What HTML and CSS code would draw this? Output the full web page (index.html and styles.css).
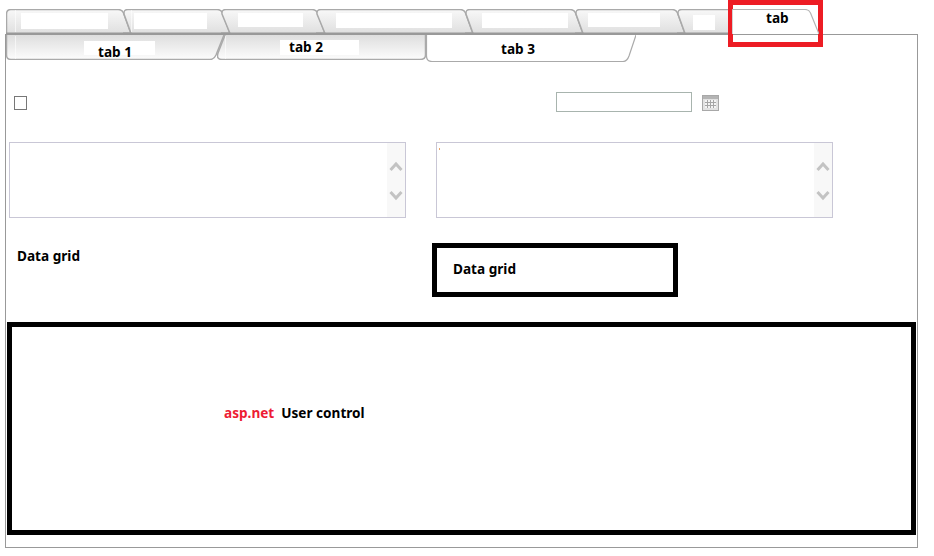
FILE: index.html
```html
<!DOCTYPE html>
<html lang="en">
<head>
<meta charset="utf-8">
<title>Tabs</title>
<link rel="stylesheet" href="styles.css">
</head>
<body>
<div class="page">
  <svg class="defs" width="0" height="0" aria-hidden="true">
    <defs>
      <linearGradient id="top-fill" x1="0" y1="0" x2="0" y2="1">
        <stop offset="0" stop-color="#f8f8f8"/>
        <stop offset="1" stop-color="#dfdfdf"/>
      </linearGradient>
      <linearGradient id="sub-fill" x1="0" y1="0" x2="0" y2="1">
        <stop offset="0" stop-color="#dedede"/>
        <stop offset="1" stop-color="#fcfcfc"/>
      </linearGradient>
    </defs>
  </svg>
  <nav class="top-tabs">
    <div class="tab tab-a">
      <svg width="125" height="25" viewBox="0 0 125 25"><path class="shape" d="M.5 25V5Q.5 .5 5 .5H112Q116 .5 117.5 4L125 24.5"/><line class="seam" x1="9.500" y1="1" x2="9.500" y2="23"/><line class="base" x1="0" y1="24.500" x2="125" y2="24.500"/></svg>
      <span class="patch patch-a"></span>
    </div>
    <div class="tab tab-b">
      <svg width="107" height="25" viewBox="0 0 107 25"><path class="shape" d="M8 24.500L1 5Q.5 .5 5 .5H94Q98 .5 99.500 4L107 24.500"/><line class="seam" x1="8.500" y1="1" x2="8.500" y2="23"/><line class="base" x1="0" y1="24.500" x2="107" y2="24.500"/></svg>
      <span class="patch patch-b"></span>
    </div>
    <div class="tab tab-c">
      <svg width="104" height="25" viewBox="0 0 104 25"><path class="shape" d="M9 24.500L1 5Q.5 .5 5 .5H91Q95 .5 96.500 4L104 24.500"/><line class="base" x1="0" y1="24.500" x2="104" y2="24.500"/></svg>
      <span class="patch patch-c"></span>
    </div>
    <div class="tab tab-d">
      <svg width="157" height="25" viewBox="0 0 157 25"><path class="shape" d="M9 24.500L1 5Q.5 .5 5 .5H144Q148 .5 149.500 4L157 24.500"/><line class="base" x1="0" y1="24.500" x2="157" y2="24.500"/></svg>
      <span class="patch patch-d"></span>
    </div>
    <div class="tab tab-e">
      <svg width="118" height="25" viewBox="0 0 118 25"><path class="shape" d="M8 24.500L1 5Q.5 .5 5 .5H105Q109 .5 110.500 4L118 24.500"/><line class="base" x1="0" y1="24.500" x2="118" y2="24.500"/></svg>
      <span class="patch patch-e"></span>
    </div>
    <div class="tab tab-f">
      <svg width="110" height="25" viewBox="0 0 110 25"><path class="shape" d="M8 24.500L1 5Q.5 .5 5 .5H97Q101 .5 102.500 4L110 24.500"/><line class="base" x1="0" y1="24.500" x2="110" y2="24.500"/></svg>
      <span class="patch patch-f"></span>
    </div>
    <div class="tab tab-g">
      <svg width="58" height="25" viewBox="0 0 58 25"><path class="shape" d="M8 24.500L1 5Q.5 .5 5 .5H58V25"/><line class="base" x1="0" y1="24.500" x2="58" y2="24.500"/></svg>
      <span class="patch patch-g"></span>
    </div>
    <div class="tab tab-active">
      <svg width="87" height="25" viewBox="0 0 87 25"><path class="shape-active" d="M0 25V.5H73Q77 .5 78.500 4L87 25"/></svg>
      <span class="tab-active-label">tab</span>
    </div>
  </nav>

  <main class="panel">
    <div class="sub-tabs">
      <div class="tab sub-1">
        <svg width="218" height="25" viewBox="0 0 218 25"><path class="sub-shape" d="M.5 0V20Q.5 24.500 5 24.500H204Q208 24.500 210 20L218 0"/><line class="seam" x1="9.500" y1="1" x2="9.500" y2="24"/></svg>
        <span class="patch patch-s1"><span class="tab-text">tab 1</span></span>
      </div>
      <div class="tab sub-2">
        <svg width="209" height="25" viewBox="0 0 209 25"><path class="sub-shape" d="M8 0L1 18Q-1 24.500 5 24.500H203Q208.500 24.500 208.500 20V0"/><line class="seam" x1="8.500" y1="1" x2="8.500" y2="24"/></svg>
        <span class="patch patch-s2"><span class="tab-text">tab 2</span></span>
      </div>
      <div class="tab sub-3">
        <svg width="210" height="27" viewBox="0 0 210 27"><path class="sub-active" d="M.5 0V21Q.5 26.500 6 26.500H197Q201 26.500 203 21L210 0"/></svg>
        <span class="sub-3-label tab-text">tab 3</span>
      </div>
    </div>

    <section class="fields">
      <span class="checkbox"></span>
      <span class="date-input"></span>
      <svg class="calendar" width="17" height="16" viewBox="0 0 17 16">
        <rect x=".5" y=".5" width="16" height="15" fill="#e2e2e2" stroke="#a8a8a8"/>
        <rect x="1" y="1" width="15" height="3" fill="#b4b4b4"/>
        <rect x="3" y="5" width="11" height="8" fill="#f4f4f4"/>
        <path d="M5.500 5v8M8.500 5v8M11.500 5v8M3 7.500h11M3 10.500h11" stroke="#a6a6a6" fill="none"/>
      </svg>
    </section>

    <section class="memos">
      <div class="memo">
        <div class="memo-body"></div>
        <div class="memo-scroll">
          <svg width="14" height="11" viewBox="0 0 14 11"><path class="chev" d="M1.500 9L7 3l5.500 6"/></svg>
          <svg width="14" height="11" viewBox="0 0 14 11"><path class="chev" d="M1.500 2L7 8l5.500-6"/></svg>
        </div>
      </div>
      <div class="memo">
        <div class="memo-body"><span class="caret"></span></div>
        <div class="memo-scroll">
          <svg width="14" height="11" viewBox="0 0 14 11"><path class="chev" d="M1.500 9L7 3l5.500 6"/></svg>
          <svg width="14" height="11" viewBox="0 0 14 11"><path class="chev" d="M1.500 2L7 8l5.500-6"/></svg>
        </div>
      </div>
    </section>

    <section class="grids">
      <span class="grid-label">Data grid</span>
      <div class="grid-box"><span>Data grid</span></div>
    </section>

    <section class="control-box">
      <span class="asp">asp.net</span>
      <span>User control</span>
    </section>
  </main>

  <div class="highlight"></div>
</div>
</body>
</html>
```

FILE: styles.css
```css
* { box-sizing: border-box; }
html, body { margin: 0; padding: 0; background: #fff; }
body {
  font-family: "Noto Sans", "Open Sans", sans-serif;
  font-size: 13.6px;
  font-weight: 700;
  color: #000;
}
.page {
  position: relative;
  width: 934px;
  height: 556px;
  padding: 9px 0 0 5px;
  overflow: hidden;
}
.defs { position: absolute; }

/* top tab strip */
.top-tabs {
  display: flex;
  height: 25px;
  padding-left: 1px;
}
.tab { display: grid; flex: none; }
.tab > * { grid-area: 1 / 1; }
.tab svg { display: block; }
.shape {
  fill: url(#top-fill);
  stroke: #a9a9a9;
  stroke-width: 1.5;
}
.seam { stroke: #fff; stroke-width: 1; opacity: .6; }
.base { stroke: #999; stroke-width: 2; }
.shape-active { fill: #fff; stroke: #b4b4b4; stroke-width: 1.2; }
.patch { background: #fff; display: block; }
.tab-b, .tab-e, .tab-f, .tab-g { margin-left: -8px; }
.tab-c, .tab-d { margin-left: -9px; }
.tab-active { margin-left: -3px; position: relative; z-index: 1; }

.patch-a { width: 87px; height: 16px; margin: 4px 0 0 15px; }
.patch-b { width: 73px; height: 16px; margin: 4px 0 0 11px; }
.patch-c { width: 65px; height: 14px; margin: 4px 0 0 17px; }
.patch-d { width: 116px; height: 15px; margin: 4px 0 0 20px; }
.patch-e { width: 86px; height: 15px; margin: 4px 0 0 17px; }
.patch-f { width: 72px; height: 14px; margin: 4px 0 0 13px; }
.patch-g { width: 22px; height: 15px; margin: 6px 0 0 16px; }
.tab-active-label { margin: 0 0 0 34px; line-height: 18px; }

/* panel */
.panel {
  width: 913px;
  height: 514px;
  border: 1px solid #999;
}
.sub-tabs { display: flex; align-items: flex-start; }
.sub-shape { fill: url(#sub-fill); stroke: #aaa; stroke-width: 1.5; }
.sub-active { fill: #fff; stroke: #aaa; stroke-width: 1.2; }
.sub-2 { margin-left: -7px; }
.tab-text { display: block; line-height: 14px; }
.patch-s1 { width: 71px; height: 14px; margin: 6px 0 0 78px; padding-left: 14px; }
.patch-s1 .tab-text { padding-top: 4px; }
.patch-s2 { width: 79px; height: 15px; margin: 5px 0 0 63px; padding-left: 9px; }
.sub-3-label { margin: 7px 0 0 75px; }

/* fields */
.fields {
  display: flex;
  align-items: center;
  height: 20px;
  margin-top: 30px;
  padding-left: 8px;
}
.checkbox {
  width: 13px;
  height: 14px;
  border: 1px solid #777;
  background: #fff;
  margin-top: 2px;
}
.date-input {
  width: 136px;
  height: 20px;
  margin-left: 529px;
  border: 1px solid #a8b4ae;
}
.calendar { margin-left: 10px; margin-top: 2px; }

/* memo boxes */
.memos {
  display: flex;
  gap: 30px;
  margin-top: 30px;
  padding-left: 3px;
}
.memo {
  display: flex;
  width: 397px;
  height: 76px;
  border: 1px solid #c9c7d6;
}
.memo-body { flex: 1; padding: 5px 0 0 2px; }
.caret { display: block; width: 1px; height: 2px; background: #e8a468; }
.memo-scroll {
  width: 18px;
  background: #f8f8f8;
  display: flex;
  flex-direction: column;
  align-items: center;
  gap: 18px;
  padding-top: 18px;
}
.memo-scroll svg { display: block; flex: none; }
.chev { fill: none; stroke: #c3c3c3; stroke-width: 3; }

/* data grid row */
.grids {
  display: flex;
  align-items: flex-start;
  height: 54px;
  margin-top: 25px;
  padding-left: 11px;
}
.grid-label { line-height: 18px; margin-top: 4px; width: 415px; }
.grid-box {
  width: 246px;
  height: 54px;
  border: 5px solid #000;
  padding: 12px 0 0 16px;
  line-height: 18px;
}

/* user control */
.control-box {
  width: 909px;
  height: 213px;
  margin: 25px 0 0 1px;
  border: 5px solid #000;
  padding: 77px 0 0 212px;
  line-height: 18px;
  display: flex;
  gap: 7px;
}
.asp { color: #ed1c34; }

/* annotation */
.highlight {
  position: absolute;
  left: 728px;
  top: 0;
  width: 95px;
  height: 47px;
  border: 5px solid #ed1c24;
  pointer-events: none;
}
```
